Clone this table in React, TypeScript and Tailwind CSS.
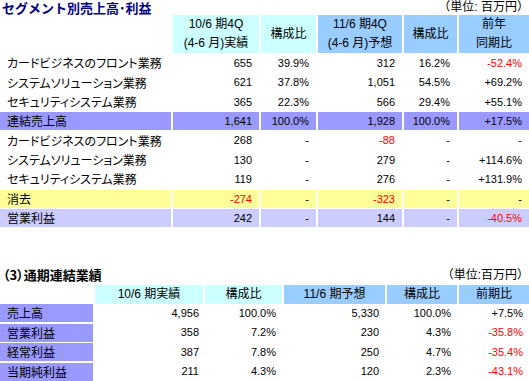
import React from "react";

const TOP_COLS = "grid grid-cols-[171px_86px_55px_84px_53px_1fr] gap-x-[2px]";
const BOT_COLS = "grid grid-cols-[93px_108px_77px_101px_70px_1fr] gap-x-[2px]";
const JP = "font-['Noto_Sans_CJK_JP',sans-serif] text-[12px] [font-feature-settings:'palt']";
const NUM = "font-['Liberation_Sans','Noto_Sans_CJK_JP',sans-serif] text-[11px]";
const HEAD = "font-['Liberation_Sans','Noto_Sans_CJK_JP',sans-serif] text-[12px] leading-[19px]";

type Row = { label: string; vals: string[]; bg: string };

const topRows: Row[] = [
  { label: "カードビジネスのフロント業務", vals: ["655", "39.9%", "312", "16.2%", "-52.4%"], bg: "" },
  { label: "システムソリューション業務", vals: ["621", "37.8%", "1,051", "54.5%", "+69.2%"], bg: "" },
  { label: "セキュリティシステム業務", vals: ["365", "22.3%", "566", "29.4%", "+55.1%"], bg: "" },
  { label: "連結売上高", vals: ["1,641", "100.0%", "1,928", "100.0%", "+17.5%"], bg: "bg-[#9999ff]" },
  { label: "カードビジネスのフロント業務", vals: ["268", "-", "-88", "-", "-"], bg: "" },
  { label: "システムソリューション業務", vals: ["130", "-", "279", "-", "+114.6%"], bg: "" },
  { label: "セキュリティシステム業務", vals: ["119", "-", "276", "-", "+131.9%"], bg: "" },
  { label: "消去", vals: ["-274", "-", "-323", "-", "-"], bg: "bg-[#ffff99]" },
  { label: "営業利益", vals: ["242", "-", "144", "-", "-40.5%"], bg: "bg-[#ccccff]" },
];

const botRows: Row[] = [
  { label: "売上高", vals: ["4,956", "100.0%", "5,330", "100.0%", "+7.5%"], bg: "" },
  { label: "営業利益", vals: ["358", "7.2%", "230", "4.3%", "-35.8%"], bg: "" },
  { label: "経常利益", vals: ["387", "7.8%", "250", "4.7%", "-35.4%"], bg: "" },
  { label: "当期純利益", vals: ["211", "4.3%", "120", "2.3%", "-43.1%"], bg: "" },
];

const isRed = (v: string) => v.startsWith("-") && v.length > 1;

export default function App() {
  return (
    <div className="w-[529px] h-[381px] bg-white text-black overflow-hidden">
      {/* Section 1 title */}
      <div className="h-[15px] flex justify-between items-start">
        <div className="font-['Noto_Sans_CJK_JP',sans-serif] text-[13px] leading-[15px] font-bold text-[#000080] pl-[2px]">
          セグメント別売上高･利益
        </div>
        <div className="font-['Liberation_Sans','Noto_Sans_CJK_JP',sans-serif] text-[12px] leading-[15px]">
          （単位: 百万円）
        </div>
      </div>

      {/* Top table */}
      <div className="flex flex-col gap-y-[1.35px]">
        <div className={`${TOP_COLS} h-[38px] ${HEAD}`}>
          <div />
          <div className="bg-[#ccffff] flex flex-col items-center justify-center">
            <span>10/6 期4Q</span>
            <span>(4-6 月)実績</span>
          </div>
          <div className="bg-[#ccffff] flex items-center justify-center">構成比</div>
          <div className="bg-[#99ccff] flex flex-col items-center justify-center">
            <span>11/6 期4Q</span>
            <span>(4-6 月)予想</span>
          </div>
          <div className="bg-[#99ccff] flex items-center justify-center">構成比</div>
          <div className="bg-[#99ccff] flex flex-col items-center justify-center">
            <span>前年</span>
            <span>同期比</span>
          </div>
        </div>
        {topRows.map((r, i) => (
          <div key={i} className={`${TOP_COLS} h-[18px]`}>
            <div className={`${r.bg} ${JP} flex items-center pl-[7px] whitespace-nowrap`}>{r.label}</div>
            {r.vals.map((v, j) => (
              <div
                key={j}
                className={`${r.bg} ${NUM} flex items-center justify-end pr-[7px] ${isRed(v) ? "text-[#ff0000]" : ""}`}
              >
                {v}
              </div>
            ))}
          </div>
        ))}
      </div>

      {/* Section 3 */}
      <div className="mt-[37px] h-[21px] flex justify-between items-center">
        <div className="font-['Noto_Sans_CJK_JP',sans-serif] text-[13px] font-bold pl-[3px] [font-feature-settings:'palt']">
          （3）通期連結業績
        </div>
        <div className="font-['Liberation_Sans','Noto_Sans_CJK_JP',sans-serif] text-[12px]">
          （単位:百万円）
        </div>
      </div>

      <div className="flex flex-col gap-y-[1.5px]">
        <div className={`${BOT_COLS} h-[17.5px] ${HEAD}`}>
          <div />
          <div className="bg-[#ccffff] flex items-center justify-center">10/6 期実績</div>
          <div className="bg-[#ccffff] flex items-center justify-center">構成比</div>
          <div className="bg-[#99ccff] flex items-center justify-center">11/6 期予想</div>
          <div className="bg-[#99ccff] flex items-center justify-center">構成比</div>
          <div className="bg-[#99ccff] flex items-center justify-center">前期比</div>
        </div>
        {botRows.map((r, i) => (
          <div key={i} className={`${BOT_COLS} h-[18px]`}>
            <div className={`bg-[#9999ff] ${JP} flex items-center pl-[7px] whitespace-nowrap`}>{r.label}</div>
            {r.vals.map((v, j) => (
              <div
                key={j}
                className={`${NUM} flex items-center justify-end ${j === 0 ? "pr-[4px]" : "pr-[6px]"} ${isRed(v) ? "text-[#ff0000]" : ""}`}
              >
                {v}
              </div>
            ))}
          </div>
        ))}
      </div>
    </div>
  );
}
